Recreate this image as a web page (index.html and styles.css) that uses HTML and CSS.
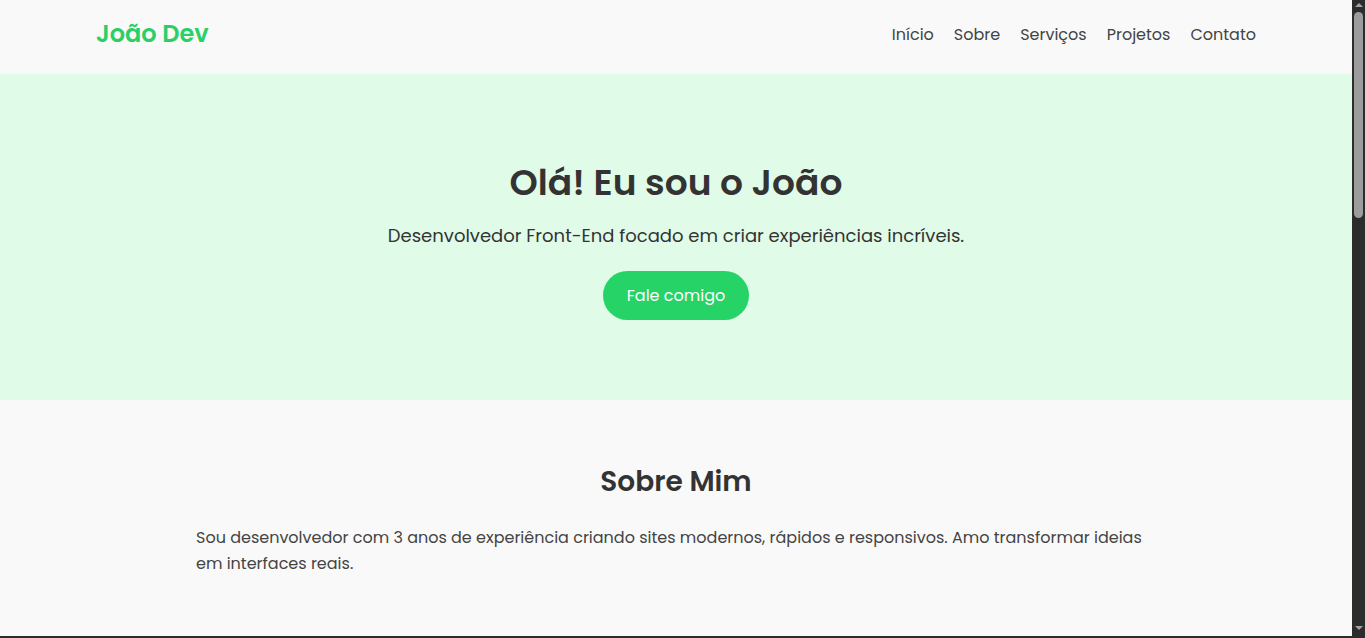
FILE: index.html
```html
<!DOCTYPE html>
<html lang="pt-BR">
<head>
<meta charset="utf-8">
<title>João Dev</title>
<link rel="stylesheet" href="styles.css">
</head>
<body>
<header class="site-header">
  <a class="logo" href="#inicio">João Dev</a>
  <nav class="nav">
    <a href="#inicio">Início</a>
    <a href="#sobre">Sobre</a>
    <a href="#servicos">Serviços</a>
    <a href="#projetos">Projetos</a>
    <a href="#contato">Contato</a>
  </nav>
</header>
<section class="hero" id="inicio">
  <h1 class="hero-title">Olá! Eu sou o João</h1>
  <p class="hero-sub">Desenvolvedor Front-End focado em criar experiências incríveis.</p>
  <a class="btn" href="#contato">Fale comigo</a>
</section>
<section class="about" id="sobre">
  <div class="container">
    <h2 class="section-title">Sobre Mim</h2>
    <p class="about-text">Sou desenvolvedor com 3 anos de experiência criando sites modernos, rápidos e responsivos. Amo transformar ideias em interfaces reais.</p>
  </div>
</section>
<section class="services" id="servicos"></section>
<div class="fake-scrollbar" aria-hidden="true">
  <span class="sb-arrow up"></span>
  <span class="sb-thumb"></span>
  <span class="sb-arrow down"></span>
</div>
</body>
</html>
```
FILE: styles.css
```css
* { box-sizing: border-box; }
html, body { margin: 0; padding: 0; }
body {
  font-family: "Poppins", "Open Sans", "DejaVu Sans", sans-serif;
  background: #f9f9f9;
  color: #333;
  padding-right: 13px;
}

.site-header {
  display: flex;
  align-items: center;
  justify-content: space-between;
  padding: 16px 96px 22px;
  background: #f9f9f9;
}
.logo {
  font-size: 24px;
  line-height: 36px;
  font-weight: 600;
  color: #2bcf68;
  text-decoration: none;
}
.nav { display: flex; gap: 20px; }
.nav a {
  color: #444;
  text-decoration: none;
  font-size: 16px;
}

.hero {
  background: #e0fbe8;
  padding: 82px 20px 80px;
  text-align: center;
}
.hero-title {
  margin: 0 0 11px;
  font-size: 36px;
  line-height: 54px;
  font-weight: 600;
  color: #333;
}
.hero-sub {
  margin: 0 0 21px;
  font-size: 18px;
  line-height: 29px;
  color: #333;
}
.btn {
  display: inline-block;
  background: #25d366;
  color: #fff;
  text-decoration: none;
  font-size: 16px;
  line-height: 24px;
  padding: 12.5px 24px;
  border-radius: 25px;
}

.container { max-width: 960px; margin: 0 auto; }
.about { padding: 61px 0 59px; }
.section-title {
  margin: 0 0 22px;
  text-align: center;
  font-size: 28px;
  line-height: 42px;
  font-weight: 600;
  color: #333;
}
.about-text {
  margin: 0;
  font-size: 16px;
  line-height: 26px;
  color: #444;
}
.services { background: #2b2b2b; height: 300px; }

.fake-scrollbar {
  position: fixed;
  top: 0;
  right: 0;
  bottom: 0;
  width: 13px;
  background: #2c2c2c;
  display: flex;
  flex-direction: column;
  align-items: center;
}
.sb-arrow {
  width: 0;
  height: 0;
  border-left: 4px solid transparent;
  border-right: 4px solid transparent;
}
.sb-arrow.up { border-bottom: 4px solid #a3a3a3; margin-top: 3px; }
.sb-arrow.down { border-top: 4px solid #a3a3a3; margin-top: auto; margin-bottom: 8px; }
.sb-thumb {
  margin-top: 5px;
  width: 9px;
  height: 206px;
  border-radius: 5px;
  background: #9c9c9c;
}
```
